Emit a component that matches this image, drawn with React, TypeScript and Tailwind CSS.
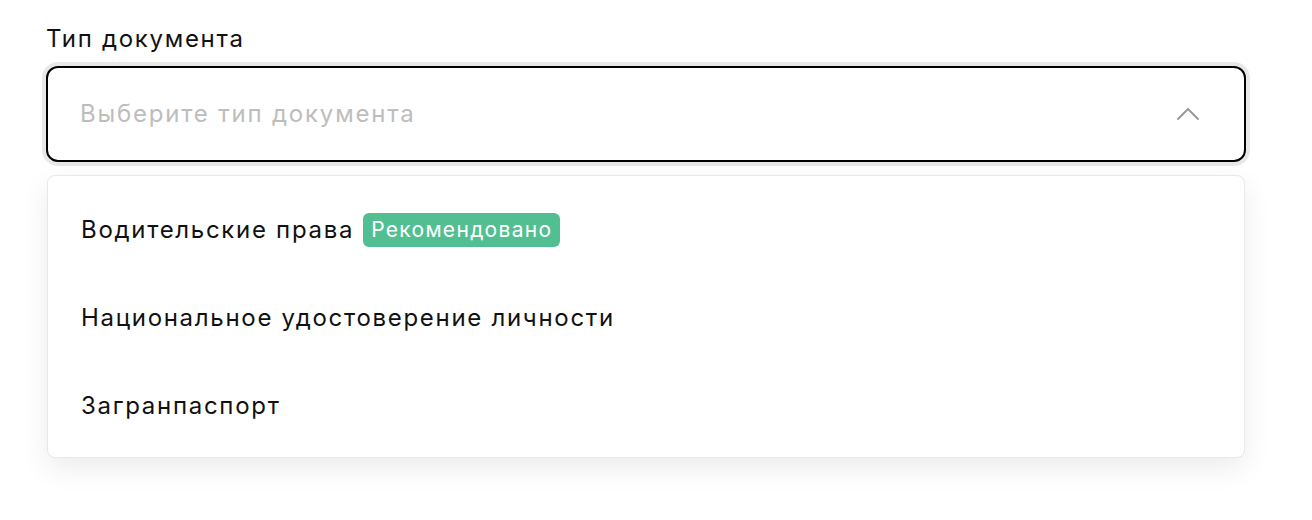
import { ChevronUp } from 'lucide-react';

const options = [
  { label: 'Водительские права', recommended: true },
  { label: 'Национальное удостоверение личности' },
  { label: 'Загранпаспорт' },
];

export default function App() {
  return (
    <div
      className="min-h-[520px] bg-white pl-[46px] pr-[66px] pt-[24px] tracking-[1.7px] text-[#111]"
      style={{ fontFamily: 'Inter, "Noto Sans", sans-serif' }}
    >
      <div className="mb-[12px] text-[24px] leading-[30px]">Тип документа</div>

      <button className="flex h-[96px] w-full items-center justify-between rounded-[12px] border-2 border-black bg-white pl-[32px] pr-[36px] ring-4 ring-[#e8e8e8]">
        <span className="text-[24px] tracking-[1.8px] text-[#bdbdbd]">Выберите тип документа</span>
        <ChevronUp className="h-[40px] w-[40px] text-[#999]" strokeWidth={1.2} />
      </button>

      <div className="mx-px mt-[13px] rounded-[8px] border border-[#e8e8e8] bg-white pt-[10px] pb-[7px] shadow-[0_10px_28px_rgba(0,0,0,0.08)]">
        {options.map((o) => (
          <div key={o.label} className="flex h-[88px] items-center gap-[9px] pl-[33px] text-[24px]">
            <span>{o.label}</span>
            {o.recommended ? (
              <span className="rounded-[6px] bg-[#52bf92] px-[8px] py-[2px] text-[21px] leading-[30px] tracking-[1.3px] text-white">
                Рекомендовано
              </span>
            ) : null}
          </div>
        ))}
      </div>
    </div>
  );
}
